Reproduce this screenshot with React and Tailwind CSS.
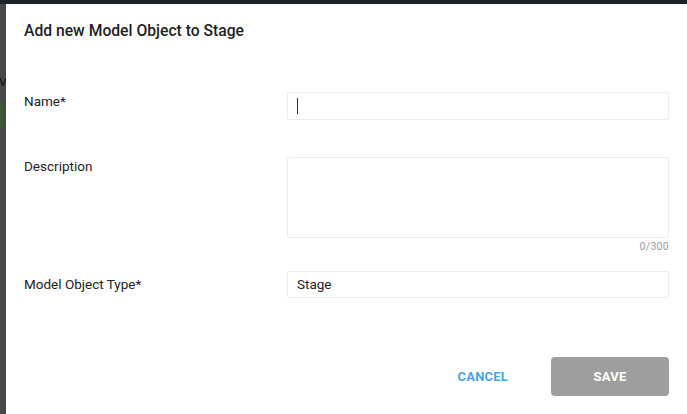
export default function App() {
  return (
    <div className="w-[687px] h-[414px] overflow-hidden flex flex-col bg-[#4a4a4a]" style={{ fontFamily: "Roboto, 'Liberation Sans', sans-serif" }}>
      <div className="h-[4px] bg-[#1c232a] shrink-0" />
      <div className="flex flex-1 min-h-0">
        <div className="w-[6px] shrink-0 bg-[#484848] flex flex-col overflow-hidden">
          <div className="h-[74px]" />
          <svg width="6" height="8" viewBox="0 0 6 8" className="shrink-0">
            <path d="M0 0 L3 8 L6 0" fill="none" stroke="#161616" strokeWidth="1.3" />
          </svg>
          <div className="h-[16px]" />
          <div className="h-[26px] w-[3px] bg-[#3f5a36]" />
        </div>
        <div className="flex-1 bg-white px-[18px] flex flex-col">
          <h2 className="text-[15.7px] font-medium text-[#222] mt-[18px] leading-[18px]">Add new Model Object to Stage</h2>
          <div className="grid grid-cols-[263px_1fr] mt-[52px]">
            <label className="text-[13.5px] text-[#222] pt-[1px] leading-[16px]">Name*</label>
            <div className="h-[28px] border border-[#ececec] rounded-[2px] flex items-center pl-[9px]">
              <span className="w-px h-[16px] bg-[#333]" />
            </div>
          </div>
          <div className="grid grid-cols-[263px_1fr] mt-[37px]">
            <label className="text-[13.5px] text-[#222] pt-[1px] leading-[16px]">Description</label>
            <div className="flex flex-col">
              <div className="h-[81px] border border-[#ececec] rounded-[2px]" />
              <div className="text-right text-[10.5px] text-[#9a9a9a] leading-[12px] mt-[3px] tracking-[0.3px]">0/300</div>
            </div>
          </div>
          <div className="grid grid-cols-[263px_1fr] mt-[18px]">
            <label className="text-[13.5px] text-[#222] pt-[5px] leading-[16px]">Model Object Type*</label>
            <div className="h-[27px] border border-[#ececec] rounded-[2px] flex items-center pl-[9px] text-[13.5px] text-[#222]">Stage</div>
          </div>
          <div className="flex justify-end items-center mt-[59px] gap-[43px]">
            <button className="text-[13px] font-bold text-[#4aa3df] tracking-[0.2px]">CANCEL</button>
            <button className="w-[118px] h-[39px] rounded-[4px] bg-[#9e9e9e] text-white text-[13px] font-bold tracking-[0.2px]">SAVE</button>
          </div>
        </div>
      </div>
    </div>
  );
}
